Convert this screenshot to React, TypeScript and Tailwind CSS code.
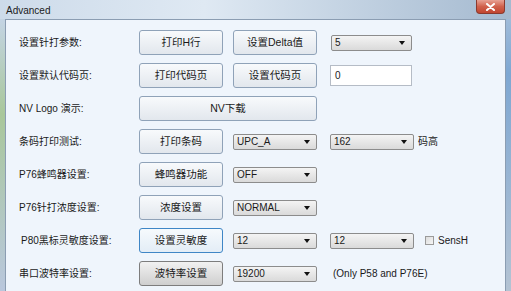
import type { ReactNode } from "react";

const FONT = { fontFamily: '"Liberation Sans", "Noto Sans CJK SC", sans-serif' };

type BtnKind = "normal" | "focus" | "hover";

function Btn({ children, wide, kind = "normal" }: { children: ReactNode; wide?: boolean; kind?: BtnKind }) {
  const look =
    kind === "focus"
      ? "border-[#3f86c6] from-[#f6fafd] to-[#e3edf6]"
      : kind === "hover"
      ? "border-[#7d7d7d] from-[#f1f1f1] to-[#cfcfcf]"
      : "border-[#8fa2b8] from-[#f8fafc] to-[#e2e7ed]";
  return (
    <div
      className={`${wide ? "w-[178px]" : "w-[84px]"} h-[25px] shrink-0 rounded-[3px] border bg-linear-to-b ${look} flex items-center justify-center text-[10.5px] text-[#1a1a1a]`}
    >
      {children}
    </div>
  );
}

function Select({ value, w = "w-[84px]" }: { value: string; w?: string }) {
  return (
    <div
      className={`${w} h-[16px] shrink-0 rounded-[2px] border border-[#8c8c8c] bg-linear-to-b from-[#f4f4f4] to-[#dadada] flex items-center justify-between pl-[3px] pr-[6px] text-[10px] text-[#1a1a1a]`}
    >
      <span>{value}</span>
      <svg width="6" height="4" viewBox="0 0 6 4">
        <path d="M0 0H6L3 4Z" fill="#111" />
      </svg>
    </div>
  );
}

function Row({ label, children, indent }: { label: string; children: ReactNode; indent?: boolean }) {
  return (
    <div className="h-[33px] flex items-center">
      <div className={`w-[120px] shrink-0 text-[10px] text-[#1a1a1a] ${indent ? "pl-[2px]" : ""}`}>{label}</div>
      <div className="flex items-center">{children}</div>
    </div>
  );
}

export default function App() {
  return (
    <div
      className="w-[511px] h-[291px] overflow-hidden flex flex-col bg-linear-to-r from-[#c5d6e8] via-[#d9e5f1] to-[#b3c6da]"
      style={FONT}
    >
      {/* title bar */}
      <div className="h-[19px] shrink-0 flex items-start justify-between bg-linear-to-r from-[#cddbea] via-[#dfe9f3] via-40% to-[#a5bad0]">
        <span className="pl-[6px] pt-[3px] text-[10px] text-[#1b1b1b]">Advanced</span>
        <div className="mr-[6px] w-[29px] h-[14px] rounded-b-[4px] border border-t-0 border-[#8b3a2e] bg-linear-to-b from-[#e7a194] via-[#d0614c] to-[#c14530] flex items-center justify-center">
          <svg width="9" height="8" viewBox="0 0 9 8">
            <path d="M1 1L8 7M8 1L1 7" stroke="#fff" strokeWidth="2" strokeLinecap="round" />
          </svg>
        </div>
      </div>

      <div className="flex flex-1 min-h-0">
        {/* left frame shows the blurred desktop through glass */}
        <div className="w-[5px] shrink-0 bg-linear-to-b from-[#c4d4e4] via-[#a9c79a] via-35% to-[#b9c7dd]" />

        <div className="flex-1 border-l border-t border-r border-[#8b9db2] bg-[#eff5fc] pl-[13px] pt-[6px]">
          <Row label="设置针打参数:">
            <Btn>打印H行</Btn>
            <div className="ml-[10px]">
              <Btn>设置Delta值</Btn>
            </div>
            <div className="ml-[14px]">
              <Select value="5" w="w-[81px]" />
            </div>
          </Row>

          <Row label="设置默认代码页:">
            <Btn>打印代码页</Btn>
            <div className="ml-[10px]">
              <Btn>设置代码页</Btn>
            </div>
            <div className="ml-[13px] w-[82px] h-[21px] border border-[#b5bcc6] bg-white text-[10px] pl-[4px] pt-[2px] text-[#1a1a1a]">
              0
            </div>
          </Row>

          <Row label="NV Logo 演示:">
            <Btn wide>NV下载</Btn>
          </Row>

          <Row label="条码打印测试:">
            <Btn>打印条码</Btn>
            <div className="ml-[10px]">
              <Select value="UPC_A" />
            </div>
            <div className="ml-[13px]">
              <Select value="162" />
            </div>
            <span className="ml-[4px] text-[10px] text-[#1a1a1a]">码高</span>
          </Row>

          <Row label="P76蜂鸣器设置:">
            <Btn>蜂鸣器功能</Btn>
            <div className="ml-[10px]">
              <Select value="OFF" />
            </div>
          </Row>

          <Row label="P76针打浓度设置:">
            <Btn>浓度设置</Btn>
            <div className="ml-[10px]">
              <Select value="NORMAL" />
            </div>
          </Row>

          <Row label="P80黑标灵敏度设置:" indent>
            <Btn kind="focus">设置灵敏度</Btn>
            <div className="ml-[10px]">
              <Select value="12" />
            </div>
            <div className="ml-[13px]">
              <Select value="12" />
            </div>
            <div className="ml-[11px] w-[9px] h-[9px] border border-[#9a9a9a] bg-linear-to-br from-[#dcdcdc] to-[#f6f6f6]" />
            <span className="ml-[4px] text-[10px] text-[#1a1a1a]">SensH</span>
          </Row>

          <Row label="串口波特率设置:">
            <Btn kind="hover">波特率设置</Btn>
            <div className="ml-[10px]">
              <Select value="19200" />
            </div>
            <span className="ml-[16px] text-[10px] text-[#1a1a1a]">(Only P58 and P76E)</span>
          </Row>
        </div>

        <div className="w-[5px] shrink-0 bg-linear-to-b from-[#9fbbd9] via-[#7ea7d2] via-20% to-[#b4c3d3]" />
      </div>
    </div>
  );
}
